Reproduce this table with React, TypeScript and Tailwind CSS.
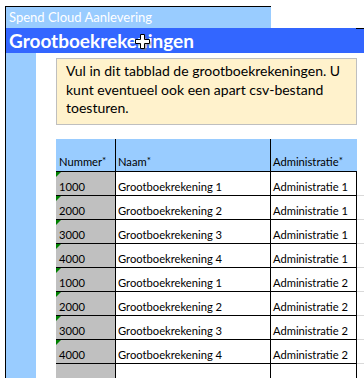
import React from "react";

const rows: [string, string, string][] = [
  ["1000", "Grootboekrekening 1", "Administratie 1"],
  ["2000", "Grootboekrekening 2", "Administratie 1"],
  ["3000", "Grootboekrekening 3", "Administratie 1"],
  ["4000", "Grootboekrekening 4", "Administratie 1"],
  ["1000", "Grootboekrekening 1", "Administratie 2"],
  ["2000", "Grootboekrekening 2", "Administratie 2"],
  ["3000", "Grootboekrekening 3", "Administratie 2"],
  ["4000", "Grootboekrekening 4", "Administratie 2"],
];

function Row({ r }: { r: [string, string, string] | null }) {
  return (
    <div className="flex h-[24px] text-[11.2px] text-black">
      <div className="relative w-[59px] bg-[#c0c0c0] border-b border-black flex items-end pl-[3px] pb-[2px] leading-[13px]">
        {r && (
          <span className="absolute left-0 top-0 w-0 h-0 border-t-[5px] border-r-[5px] border-t-[#008000] border-r-transparent" />
        )}
        {r ? r[0] : ""}
      </div>
      <div className="w-[155px] border-l border-b border-black flex items-end pl-[2px] pb-[2px] leading-[13px]">
        {r ? r[1] : ""}
      </div>
      <div className="w-[87px] border-l border-r border-b border-black flex items-end pl-[2px] pb-[2px] leading-[13px]">
        {r ? r[2] : ""}
      </div>
      <div className="w-[7px] border-b border-[#d9d9d9]" />
    </div>
  );
}

function Star() {
  return <span className="inline-block text-[10px] leading-[10px] -translate-y-[2px]">*</span>;
}

export default function App() {
  return (
    <div className="relative w-[364px] h-[378px] overflow-hidden bg-white font-['Lato',sans-serif]">
      <div className="pt-[6px] pl-[5px] h-full">
        <div className="border-l border-black h-full flex flex-col">
          <div className="flex">
            <div className="w-[265px] h-[22px] border-t border-black bg-[#99ccff] text-white text-[13px] pl-[3px] leading-[20px]">
              Spend Cloud Aanlevering
            </div>
          </div>
          <div className="relative h-[26px] bg-[#3366ff] text-white font-bold text-[19px] pl-[3px] leading-[25px]">
            Grootboekrekeningen
            <span className="absolute right-0 top-0 w-[8px] h-px bg-black" />
          </div>
          <div className="flex flex-1">
            <div className="w-[30px] bg-[#99ccff]" />
            <div className="flex-1 pl-[20px] pt-[5px]">
              <div className="w-[301px] h-[67px] border border-[#bfbfbf] bg-[#fff2cc] pl-[9px] pr-[12px] pt-[3px] text-[14px] leading-[18.5px] text-black">
                Vul in dit tabblad de grootboekrekeningen. U kunt eventueel ook een apart csv-bestand toesturen.
              </div>
              <div className="mt-[14px]">
                <div className="flex h-[33px] text-[11.2px] text-black">
                  <div className="w-[59px] bg-[#99ccff] border-b border-black flex items-end pl-[3px] pb-[3px] leading-[13px]">
                    <span>
                      Nummer
                      <Star />
                    </span>
                  </div>
                  <div className="w-[155px] bg-[#99ccff] border-l border-b border-black flex items-end pl-[2px] pb-[3px] leading-[13px]">
                    <span>
                      Naam
                      <Star />
                    </span>
                  </div>
                  <div className="w-[87px] bg-[#99ccff] border-l border-b border-black flex items-end pl-[2px] pb-[3px] leading-[13px]">
                    <span>
                      Administratie
                      <Star />
                    </span>
                  </div>
                </div>
                {rows.map((r, i) => (
                  <Row key={i} r={r} />
                ))}
                <Row r={null} />
              </div>
            </div>
          </div>
        </div>
      </div>
      <svg
        className="absolute left-[135px] top-[34px]"
        width="17"
        height="17"
        viewBox="0 0 17 17"
      >
        <path
          d="M6.5 1.5h4v5h5v4h-5v5h-4v-5h-5v-4h5z"
          fill="#808080"
          transform="translate(1,1)"
          opacity="0.5"
        />
        <path d="M5.5 0.5h4v5h5v4h-5v5h-4v-5h-5v-4h5z" fill="white" stroke="black" strokeWidth="1" />
      </svg>
    </div>
  );
}
